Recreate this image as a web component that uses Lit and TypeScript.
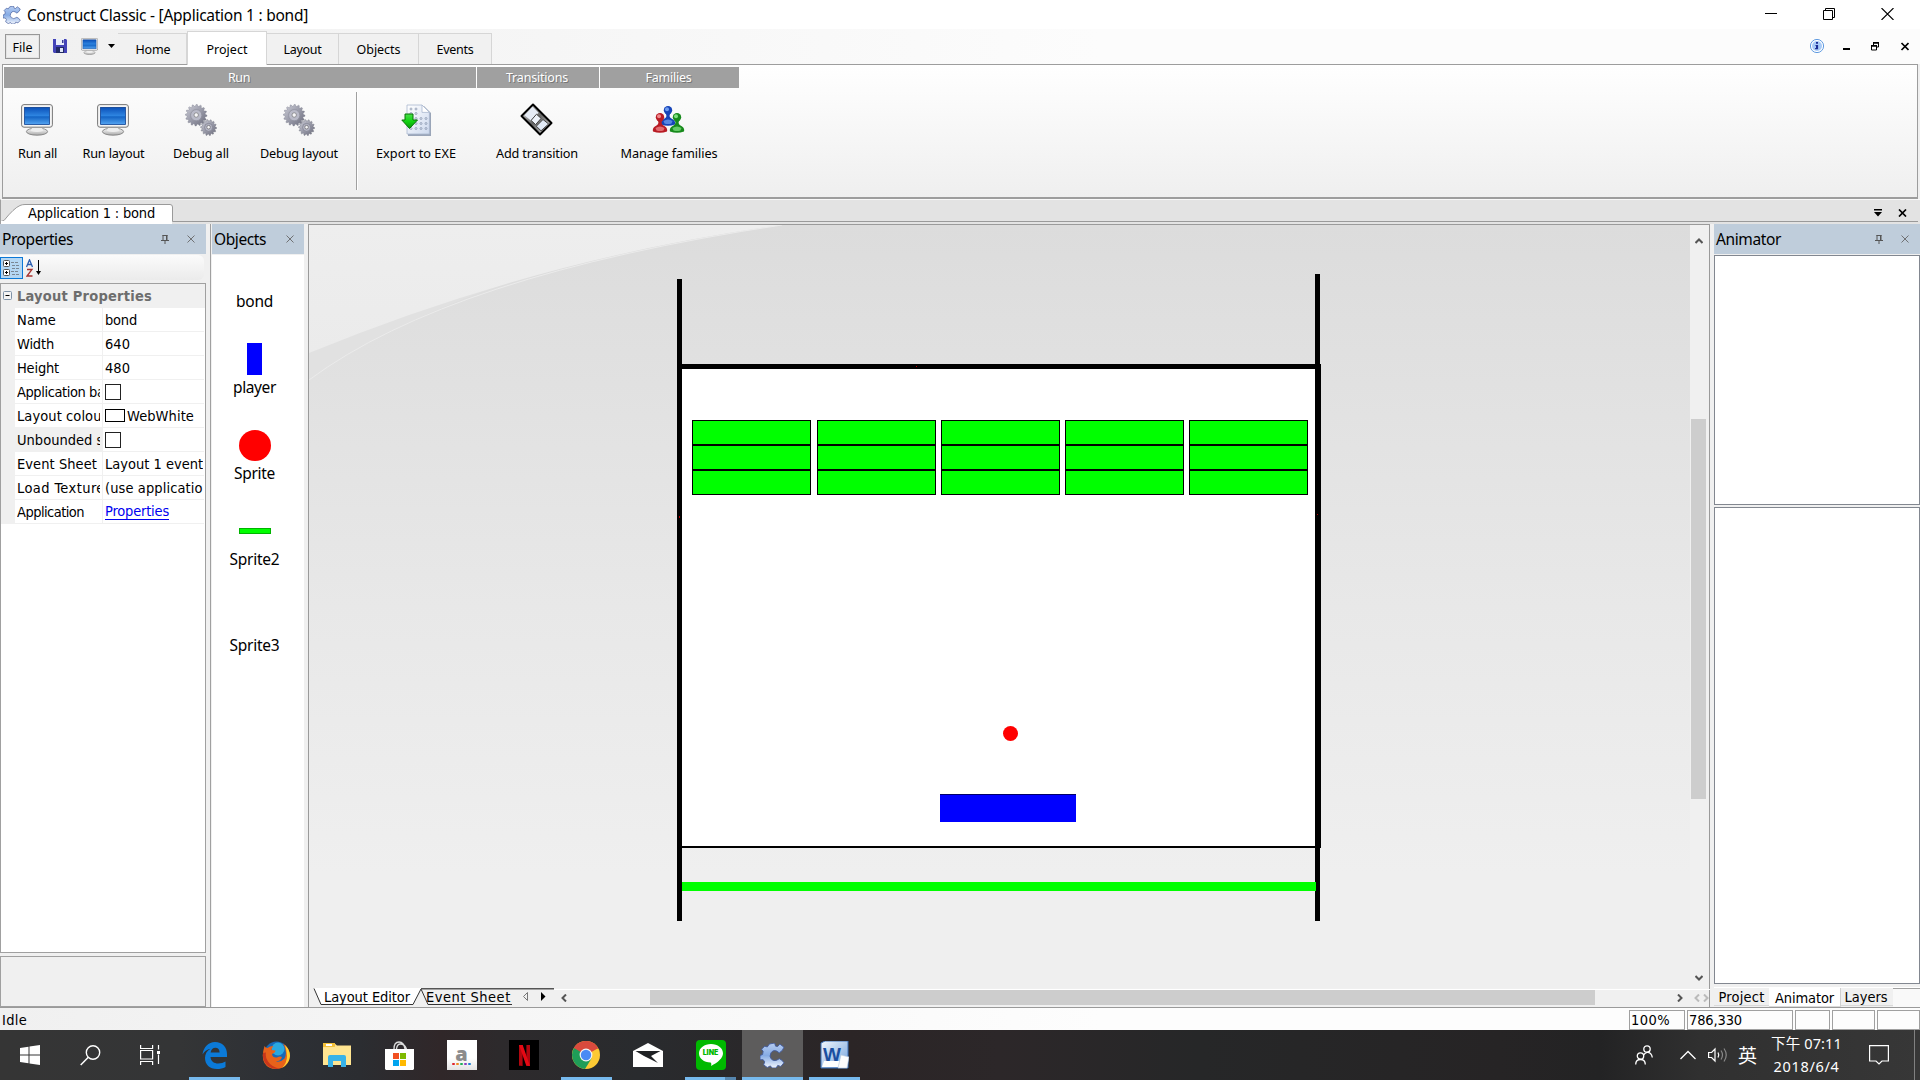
import { LitElement, html, css, svg } from "lit";
import { customElement, property } from "lit/decorators.js";

/* Text label whose letter spacing is adjusted so that it takes a given width. */
@customElement("fit-label")
class FitLabel extends LitElement {
  @property({ type: Number }) w = 0;
  @property() text = "";
  static styles = css`
    :host { display: inline-block; white-space: pre; flex: none; }
    .t { display: inline-block; }
  `;
  updated() {
    const s = this.renderRoot.querySelector(".t") as HTMLElement;
    s.style.letterSpacing = "0px";
    const n = s.getBoundingClientRect().width;
    if (this.w && n) {
      const d = (this.w - n) / this.text.length;
      s.style.letterSpacing = d.toFixed(3) + "px";
    }
  }
  render() {
    return html`<span class="t">${this.text}</span>`;
  }
}

const L = (text: string, w = 0) => html`<fit-label .text=${text} .w=${w}></fit-label>`;

const gearPath = (cx: number, cy: number, r: number, teeth: number, depth: number) => {
  let d = "";
  const n = teeth * 4;
  for (let i = 0; i < n; i++) {
    const a = (i / n) * Math.PI * 2;
    const rr = i % 4 < 2 ? r : r - depth;
    d += (i ? "L" : "M") + (cx + rr * Math.cos(a)).toFixed(2) + " " + (cy + rr * Math.sin(a)).toFixed(2);
  }
  return d + "Z";
};

const monitor = (w: number, h: number) => html`<svg width=${w} height=${h} viewBox="0 0 32 32">
  <defs>
    <linearGradient id="scr" x1="0" y1="0" x2="0" y2="1"><stop offset="0" stop-color="#0b50b8" /><stop offset=".5" stop-color="#2f86e2" /><stop offset=".55" stop-color="#1263c4" /><stop offset="1" stop-color="#55a5f2" /></linearGradient>
    <linearGradient id="std" x1="0" y1="0" x2="0" y2="1"><stop offset="0" stop-color="#fff" /><stop offset="1" stop-color="#aaa" /></linearGradient>
  </defs>
  <ellipse cx="16" cy="27.6" rx="10.6" ry="3.6" fill="url(#std)" stroke="#777" stroke-width=".8" />
  <path d="M11 23h10l1 4q-6 2-12 0z" fill="#eee" />
  <rect x=".6" y=".6" width="30.8" height="22.6" rx="2.4" fill="#f4f4f4" stroke="#777" />
  <rect x="3.6" y="3.4" width="24.8" height="17" fill="url(#scr)" stroke="#0a3f92" stroke-width=".8" />
</svg>`;

const gears = html`<svg width="32" height="32" viewBox="0 0 32 32">
  <defs><linearGradient id="gg" x1="0" y1="0" x2="1" y2="1"><stop offset="0" stop-color="#cfd0da" /><stop offset=".6" stop-color="#8f909f" /><stop offset="1" stop-color="#6d6e7c" /></linearGradient></defs>
  <path d=${gearPath(11.2, 11.2, 10.8, 16, 1.8)} fill="url(#gg)" stroke="#777988" stroke-width=".4" />
  <circle cx="11.2" cy="11.2" r="5.6" fill="#b9bac8" stroke="#8b8c9a" stroke-width=".7" />
  <circle cx="11.2" cy="11" r="2.2" fill="#f6f6f8" stroke="#666" stroke-width=".6" />
  <path d=${gearPath(23.6, 23.6, 8, 14, 1.5)} fill="url(#gg)" stroke="#666775" stroke-width=".4" />
  <circle cx="23.6" cy="23.4" r="4" fill="#b4b5c4" stroke="#7b7c8a" stroke-width=".7" />
  <circle cx="23.6" cy="23.2" r="1.8" fill="#f4f4f6" stroke="#555" stroke-width=".6" />
</svg>`;

const exportIcon = html`<svg width="30" height="32" viewBox="0 0 30 32">
  <defs>
    <linearGradient id="pg" x1="0" y1="0" x2="1" y2="1"><stop offset="0" stop-color="#fff" /><stop offset="1" stop-color="#cdd9ee" /></linearGradient>
    <linearGradient id="ar" x1="0" y1="0" x2="0" y2="1"><stop offset="0" stop-color="#4be04b" /><stop offset=".5" stop-color="#12d412" /><stop offset="1" stop-color="#089a08" /></linearGradient>
  </defs>
  <path d="M7 2h16l7 7v23H7z" fill="#9aa5b8" />
  <path d="M6 1h15l7.400 7.400V30H6z" fill="url(#pg)" stroke="#a9b7cf" stroke-width=".8" />
  <path d="M21 1v7.400h7.400z" fill="#fff" stroke="#a9b7cf" stroke-width=".8" />
  ${[5, 9.5, 14.5, 19.5, 24.5].map((y, r) => [10, 15, 20, 25].map((x, c) => (r < 2 && c > 1) ? "" : svg`<circle cx=${x} cy=${y} r="1" fill="none" stroke="#7f8ea8" stroke-width=".7" />`))}
  <path d="M4 10h8v6h4.500L8.500 24.500 .8 16H4z" fill="url(#ar)" stroke="#067406" stroke-width="1" />
</svg>`;

const filmIcon = html`<svg width="33" height="33" viewBox="0 0 33 33">
  <defs><linearGradient id="fl" x1="0" y1="0" x2="1" y2="1"><stop offset="0" stop-color="#eee" /><stop offset=".5" stop-color="#666" /><stop offset="1" stop-color="#ddd" /></linearGradient></defs>
  <path d="M13 1.500L31.500 20 20 31.500 1.500 13z" fill="url(#fl)" stroke="#000" stroke-width="2" stroke-linejoin="round" />
  <path d="M12.500 3.800l6 6-7.500 8-6.500-5.500z" fill="#e6ecf6" />
  <path d="M16.500 11.200l4.600 4.200-5.500 6.200-4.500-4.200z" fill="#eef3fb" stroke="#444" />
  <path d="M23 16.500l5.600 4.500-7.600 6.800-4.700-4.600z" fill="#e2ebf8" stroke="#444" />
</svg>`;

const person = (x: number, y: number, a: string, b: string) => svg`
  <g transform="translate(${x} ${y})">
    <path d="M0 18.500q-1-4 3.500-6 2.800-1.500 1.500-4.500h4q-1.300 3 1.500 4.500 4.500 2 3.500 6-7 2.500-14 0z" fill=${b} />
    <circle cx="7" cy="4.300" r="4.200" fill=${b} /><circle cx="6" cy="3.200" r="2" fill=${a} />
    <path d="M2.500 15q4.500-3 9 0l-1 2.500q-3.500 1-7 0z" fill=${a} opacity=".75" />
  </g>`;

const familyIcon = html`<svg width="33" height="27" viewBox="0 0 33 27">
  ${person(9, 0, "#6f9cf0", "#1644b8")}${person(1, 7, "#f0888c", "#b81c24")}${person(18, 7, "#7fe07f", "#178a1c")}
</svg>`;

const cIcon = (s: number) => html`<svg width=${s} height=${s} viewBox="0 0 24 24">
  <defs><linearGradient id="cg" x1="0" y1="0" x2="0" y2="1"><stop offset="0" stop-color="#b6cdf2" /><stop offset=".5" stop-color="#86abe4" /><stop offset="1" stop-color="#f2f6fd" /></linearGradient></defs>
  <path d="M9 1l5-1 1 3 2 .3L19 1l4 3-1.500 3-3 2.500q-5-4.500-8 0-2 3.500.5 6 3 3 7.500-.5l2.500 1.500L23 19l-3 3.500-3-1-1.500 2.500h-4L10 22l-3 1.500L3.500 21l1-3L3 16H0v-4l2.500-1 .5-3L1.500 6l3-3L7 3.800z" fill="url(#cg)" stroke="#445c9c" stroke-width=".9" />
</svg>`;

const pin = html`<svg width="8" height="9" viewBox="0 0 8 9"><path d="M2 0v5M5.500 0v5M1.500.5h5M0 5.500h8M4 6v3" stroke="#555" fill="none" /><path d="M5 0h1.500v5H5z" fill="#555" /></svg>`;
const thinX = html`<svg width="8" height="8" viewBox="0 0 8 8"><path d="M.5.5l7 7M7.500.5l-7 7" stroke="#666" stroke-width=".9" /></svg>`;
const boldX = html`<svg width="9" height="8" viewBox="0 0 9 8"><path d="M1 .5l7 7M8 .5l-7 7" stroke="#000" stroke-width="1.700" /></svg>`;

const rows: [string, number, unknown][] = [
  ["Name", 39, L("bond", 32)],
  ["Width", 37, L("640", 25)],
  ["Height", 42, L("480", 25)],
  ["Application background", 145, html`<i class="chk"></i>`],
  ["Layout colour", 90, html`<i class="swatch"></i>${L("WebWhite", 67)}`],
  ["Unbounded scrolling", 134, html`<i class="chk"></i>`],
  ["Event Sheet", 80, L("Layout 1 events", 105)],
  ["Load Textures", 95, L("(use application", 106)],
  ["Application", 67, html`<a class="link">${L("Properties", 64)}</a>`],
];

const objects: [string, number, string][] = [
  ["bond", 37, ""], ["player", 43, "blue"], ["Sprite", 41, "red"], ["Sprite2", 50, "green"], ["Sprite3", 50, ""],
];

const W = (n: number) => `width:${n}px`;

const taskIcons: { w: number; icon: unknown; cls?: string; bar?: number }[] = [
  { w: 60, icon: html`<svg width="20" height="20" viewBox="0 0 20 20"><path d="M0 3l8.500-1.300v7.800H0zM9.500 1.500L20 0v9.500H9.500zM0 10.500h8.500v7.800L0 17zM9.500 10.500H20V20l-10.500-1.500z" fill="#fff" /></svg>` },
  { w: 60, icon: html`<svg width="21" height="21" viewBox="0 0 21 21"><circle cx="13" cy="7.500" r="6.700" fill="none" stroke="#fff" stroke-width="1.400" /><path d="M8.300 12.300L.7 20" stroke="#fff" stroke-width="1.500" /></svg>` },
  { w: 59, icon: html`<svg width="20" height="20" viewBox="0 0 20 20"><path d="M.6 0v3.500h12V0M.6 20v-3.500h12V20M.6 5.500h12v8.500H.6zM18.500 0v4.500M18.500 9.500V19" fill="none" stroke="#fff" stroke-width="1.200" /><path d="M17 6h3v3h-3z" fill="#fff" /></svg>` },
  { w: 4, icon: "" },
  { w: 62, bar: 51, icon: html`<svg width="25" height="27" viewBox="0 0 25 27"><path d="M.5 12.500C1.500 5 6.500 0 13 0c7.500 0 12 5 12 12v3H8.500c.3 4.500 4 6.500 7.500 6.500 3 0 5.500-.8 7.500-2v5.500c-2.500 1.400-5.500 2-8.500 2-7.500 0-12-4.500-12-11 0-4 2-7.500 5.500-9.300C5 7.500 2.200 9.300.5 12.500zM8.600 10.500h9c0-3-1.500-4.800-4.200-4.800-2.600 0-4.300 2-4.800 4.800z" fill="#0b7ad8" /></svg>` },
  { w: 61, icon: html`<svg width="28" height="28" viewBox="0 0 28 28"><circle cx="14.500" cy="12.500" r="12" fill="#1769b8" /><circle cx="16" cy="8" r="6.500" fill="#2aa8e0" /><path d="M2.500 5q1 2 3 2 2-2 6-2-2 2-2 4l4 .5q0 2-3.500 3.500.5 4 5 3.500 3-1.500 5-.5-1 4-6 4.500 5 1 8.500-3Q26 11 21 2.500 27.500 7 28 14q0 6-4 10t-10 4Q6 28 2.500 22T2.500 5z" fill="#e8621a" /><path d="M23 4q5 5 5 11-1 8-8 12 5-5 5-12-.3-6-2-11z" fill="#ffcf30" /><path d="M1 12q-1 8 5 13 5 4 12 2.500-8-1-12-7-3-4-2-9z" fill="#c9371b" /></svg>` },
  { w: 62, icon: html`<svg width="28" height="24" viewBox="0 0 28 24"><path d="M0 0h11l3 2.500h14V22H0z" fill="#ffe08a" /><path d="M0 0h12v4H0z" fill="#f4c13a" /><path d="M3 1h6v2H3z" fill="#fff" /><path d="M0 5l14-1.500h14V22H0z" fill="#ffe591" /><path d="M5 24V14q0-2 2-2h14q2 0 2 2v10h-5v-6h-8v6z" fill="#38b3e8" /></svg>` },
  { w: 62, icon: html`<svg width="29" height="29" viewBox="0 0 29 29"><path d="M9 8Q9 1 14 1t6 7M11.500 8q.5-5 4-5 4 0 6 5" fill="none" stroke="#ddd" stroke-width="1.300" /><path d="M0 8h29v20l-1 1H1l-1-1z" fill="#fff" /><path d="M8 12h6v6H8z" fill="#f25022" /><path d="M15 12h6v6h-6z" fill="#7fba00" /><path d="M8 19h6v6H8z" fill="#00a4ef" /><path d="M15 19h6v6h-6z" fill="#ffb900" /></svg>` },
  { w: 63, icon: html`<span class="tile amazon"><b>a</b><span class="dots"><i></i><i></i><i></i><i></i><i></i></span></span>` },
  { w: 62, icon: html`<span class="tile netflix"><svg width="11" height="21" viewBox="0 0 11 21"><path d="M0 0h3.600v21q-2-.5-3.600-.2zM7.400 0H11v21q-2-.3-3.600-.3z" fill="#b1060f" /><path d="M0 0h3.700L11 21q-2-.4-3.700-.3z" fill="#e50914" /></svg></span>` },
  { w: 62, bar: 51, icon: html`<svg width="28" height="28" viewBox="0 0 28 28"><circle cx="14" cy="14" r="14" fill="#fcc934" /><path d="M14 14L1.900 7A14 14 0 0 1 26.100 7.300z" fill="#d94a3d" /><path d="M14 7.500h12.400A14 14 0 0 0 1.900 7l6.400 10.500z" fill="#d94a3d" /><path d="M1.900 7A14 14 0 0 0 13 28l6.500-10.500L14 14z" fill="#1f9d58" /><path d="M8.300 17.500L1.900 7z" fill="#1f9d58" /><circle cx="14" cy="14" r="6.400" fill="#f4f4f4" /><circle cx="14" cy="14" r="5.200" fill="#4a8af4" /></svg>` },
  { w: 62, icon: html`<svg width="30" height="24" viewBox="0 0 30 24"><path d="M0 8L15 0l15 8v16H0z" fill="#fff" /><path d="M2.500 8h25L18 13l7 7-14-7z" fill="#1f2124" /></svg>` },
  { w: 63, cls: "line", icon: html`<span class="tile lineapp"><svg width="24" height="22" viewBox="0 0 24 22"><path d="M12 0c6.600 0 12 4 12 9.300 0 4.700-5 9.200-12 12.700.5-1.500.5-3-.5-3.500C5 18.500 0 14.500 0 9.300 0 4 5.400 0 12 0z" fill="#fff" /></svg><b>LINE</b></span>` },
  { w: 61, cls: "active", bar: 61, icon: cIcon(25) },
  { w: 62, bar: 51, icon: html`<svg width="29" height="28" viewBox="0 0 29 28"><defs><linearGradient id="wg" x1="0" y1="0" x2="1" y2="1"><stop offset="0" stop-color="#f4f8fd" /><stop offset="1" stop-color="#6fa0dc" /></linearGradient></defs><path d="M1 2l4-2h23v27H1z" fill="url(#wg)" stroke="#3b6fb5" /><path d="M4 20h22v6H2z" fill="#fff" /><path d="M21 14l8 2-2 11h-9z" fill="#fdfdfd" stroke="#b9c9de" stroke-width=".6" /><text x="3" y="19.500" class="word">W</text></svg>` },
];

@customElement("app-root")
class AppRoot extends LitElement {
  static styles = css`
    :host { display: block; width: 1920px; height: 1080px; overflow: hidden; background: #f0f0f0; color: #000;
      font-family: "Noto Sans", "Noto Sans CJK TC", sans-serif; font-size: 13px; }
    * { box-sizing: border-box; }
    svg { display: block; flex: none; }
    .app { display: flex; flex-direction: column; height: 1080px; }
    .tah { font-family: "DejaVu Sans Condensed", "DejaVu Sans", sans-serif; font-stretch: condensed; font-size: 14.500px; }

    .title { height: 29px; flex: none; background: #fff; display: flex; align-items: center; padding-left: 3px; font-size: 15.500px; }
    .title .cap { margin-left: 6px; }
    .wins { margin-left: auto; display: flex; align-items: center; gap: 46px; padding: 0 26px 2px 0; }

    .tabs { height: 35px; flex: none; display: flex; background: linear-gradient(90deg, #f0f0f0 0, #fcfcfc 1100px); line-height: 19px; font-size: 12.500px; }
    .file { width: 35px; height: 25px; margin: 5px 0 0 5px; border: 1px solid #979797; outline: 1px solid #e4e4e4; outline-offset: -2px; display: flex; align-items: center; justify-content: center; padding-top: 1px; }
    .quick { width: 78px; display: flex; align-items: flex-start; padding: 9px 0 0 13px; }
    .quick .q2 { margin-left: 14px; } .quick .q3 { margin: 6px 0 0 10px; }
    .tab { height: 31px; margin-top: 4px; border: 1px solid #d6d6d6; border-left: 0; border-bottom: 0; display: flex; align-items: center; justify-content: center; background: #f1f1f1; }
    .tab.on { height: 34px; margin-top: 2px; margin-bottom: -1px; background: #fff; border-left: 1px solid #d6d6d6; z-index: 1; padding-top: 2px; }
    .tab.first { padding-left: 2px; }
    .mdi { margin-left: auto; display: flex; align-items: center; padding: 0 11px 0 0; }

    .ribbon { height: 135px; flex: none; margin: 0 2px 0 2px; border: 1px solid #9d9d9d; border-bottom-width: 2px; background: linear-gradient(#fff, #efefef); padding: 2px 0 0 1px; }
    .heads { display: flex; gap: 1px; height: 21px; color: #fff; font-size: 12.500px; }
    .head { background: #a0a0a0; display: flex; align-items: center; justify-content: center; text-shadow: 1px 1px 0 #777; padding-right: 2px; }
    .cmds { display: flex; height: 102px; padding-top: 4px; }
    .cmd { display: flex; flex-direction: column; align-items: center; padding-top: 11px; }
    .cmd .ic { height: 33px; display: flex; align-items: center; padding-right: 1px; }
    .cmd .tx { margin-top: 7px; line-height: 20px; font-size: 12.700px; }
    .rule { width: 2px; height: 98px; background: linear-gradient(90deg, #a0a0a0 50%, #fff 50%); }

    .doc { height: 25px; flex: none; background: #e3e3e3; display: flex; align-items: flex-end; border-left: 1px solid #a0a0a0; border-top: 1px solid #f8f8f8; }
    .doctab { height: 20px; flex: none; width: 174px; display: grid; }
    .doctab > * { grid-area: 1 / 1; }
    .doctab .tx { padding-left: 27px; line-height: 19px; height: 18px; overflow: hidden; }
    .docr { flex: 1; align-self: stretch; border-bottom: 1px solid #9a9a9a; margin: 0 2px 2px 0; display: flex; justify-content: flex-end; align-items: center; gap: 16px; padding: 4px 11px 0 0; }

    .main { height: 784px; flex: none; display: flex; background: #f0f0f0; border-bottom: 1px solid #9a9a9a; }
    .phead { height: 30px; flex: none; background: #bfcddb; display: flex; align-items: center; font-size: 15.500px; padding: 0 0 1px 2px; }
    .phead .r { margin-left: auto; display: flex; align-items: center; gap: 18px; padding-top: 1px; }
    .props { width: 206px; flex: none; display: flex; flex-direction: column; }
    .tools { height: 25px; margin: 1px 2px 3px 0; background: linear-gradient(#fbfbfb, #ebebeb); border-radius: 0 6px 6px 0; display: flex; align-items: center; padding-top: 2px; }
    .catbtn { width: 23px; height: 22px; border: 1px solid #0c78d6; background: #b5d7f3; display: flex; align-items: center; justify-content: center; }
    .tools .az { margin-left: 3px; }
    .grid { height: 670px; flex: none; border: 1px solid #a0a0a0; background: #fff; }
    .ghead { height: 24px; background: #f0f0f0; display: flex; align-items: center; color: #6d6d6d; font-weight: bold; }
    .ghead svg { margin: 0 5px 0 2px; }
    .row { height: 24px; display: flex; border-left: 14px solid #f0f0f0; }
    .row .k { width: 88px; border-right: 1px solid #f0f0f0; border-bottom: 1px solid #f0f0f0; padding: 1px 0 0 2px; flex: none; display: flex; align-items: center; }
    .clip { overflow: hidden; width: 83px; display: flex; flex: none; }
    .row.sel .k { background: #f0f0f0; }
    .row .v { width: 101px; border-bottom: 1px solid #f0f0f0; padding: 1px 0 0 2px; display: flex; align-items: center; }
    .row .v .clip { width: 98px; align-items: center; }
    .chk { width: 16px; height: 16px; border: 1px solid #222; background: #fff; flex: none; }
    .swatch { width: 20px; height: 13px; border: 1px solid #000; flex: none; margin-right: 2px; }
    .link { color: #0000f0; border-bottom: 1px solid #0000f0; line-height: 16px; }
    .desc { height: 52px; margin-top: 3px; border: 1px solid #a0a0a0; }

    .objs { width: 94px; flex: none; margin-left: 4px; border-left: 1px solid #a0a0a0; padding-left: 1px; display: flex; flex-direction: column; }
    .olist { flex: 1; background: #fff; margin-top: 1px; display: flex; flex-direction: column; align-items: center; font-size: 15.500px; padding: 2px 7px 0 0; }
    .obj { height: 86px; flex: none; display: flex; flex-direction: column; align-items: center; }
    .obj .pic { height: 32px; display: flex; align-items: center; justify-content: center; margin-bottom: 1px; }
    .obj .tx { line-height: 22px; }
    .blue { width: 15px; height: 32px; background: #00f; }
    .red { width: 32px; height: 31px; border-radius: 50%; background: #f00; }
    .green { width: 32px; height: 6px; background: #0f0; border: 1px solid #00b400; margin-top: 0; }

    .edit { width: 1402px; flex: none; margin-left: 4px; border-right: 1px solid #9a9a9a; display: flex; flex-direction: column; }
    .area { height: 764px; flex: none; display: flex; border-left: 1px solid #9a9a9a; border-top: 1px solid #9a9a9a; }
    .vs { width: 15px; margin: 5px 0 0 1px; background: #f0f0f0; display: flex; flex-direction: column; align-items: center; }
    .vs .up { margin-top: 7px; }
    .vs .thumb { width: 15px; height: 380px; margin-top: 174px; background: #cdcdcd; }
    .vs .dn { margin-top: 175px; }
    .hs { height: 19px; display: flex; border-left: 1px solid #9a9a9a; background: #f0f0f0; }
    .etabs { width: 245px; flex: none; display: grid; height: 17px; }
    .etabs > * { grid-area: 1 / 1; }
    .etext { display: flex; padding-left: 15px; line-height: 19px; }
    .etext .e2 { margin-left: 16px; width: 87px; overflow: hidden; }
    .hbar { flex: 1; display: flex; align-items: center; height: 16px; border-top: 1px solid #fff; margin-top: 1px; }
    .hbar .thumb { width: 945px; height: 15px; background: #cdcdcd; }

    .anim { width: 210px; flex: none; padding-left: 4px; display: flex; flex-direction: column; }
    .box { border: 1px solid #828790; background: #fff; flex: none; }
    .atabs { display: flex; height: 20px; border-top: 1px solid #fff; }
    .atab { background: #f0f0f0; height: 18px; border-bottom: 1px solid #d9d9d9; display: flex; justify-content: center; line-height: 18px; overflow: hidden; }
    .atab.last { padding-right: 2px; }
    .atab.on { background: #fff; height: 19px; line-height: 20px; border-right: 1px solid #d0d0d0; }
    .afill { flex: 1; border-top: 1px solid #a0a0a0; background: #f9f9f9; }

    .status { height: 22px; flex: none; background: linear-gradient(90deg, #f0f0f0, #fdfdfd 1100px); display: flex; align-items: center; padding-left: 2px; }
    .status .msg { padding-top: 2px; }
    .cells { margin-left: auto; display: flex; gap: 2px; }
    .cell { height: 20px; margin-top: 1px; border: 1px solid #a0a0a0; line-height: 19px; padding-left: 1px; overflow: hidden; }

    .task { height: 50px; flex: none; display: flex; color: #fff;
      background: linear-gradient(90deg, #353535 0, #343536 180px, #2d3035 280px, #2b2d31 360px, #302729 440px, #2d2a2c 500px, #292b2e 640px, #2b2526 850px, #2c2729 1000px, #262728 1200px, #262425 1500px, #232324 1600px, #303030 1700px, #373737 1920px); }
    .slot { display: flex; align-items: center; justify-content: center; flex: none; position: relative; }
    .slot.active { background: #5d5c5c; }
    .bar { position: absolute; bottom: 0; height: 3px; background: #76b9ed; }
    .bar.l1 { left: 6px; width: 40px; } .bar.l2 { left: 46px; width: 11px; background: #5686ae; }
    .tile { width: 30px; height: 30px; display: flex; align-items: center; justify-content: center; }
    .amazon { background: linear-gradient(#fff 60%, #e4e4e4); flex-direction: column; color: #8c8c8c; font: bold 20px/18px "Open Sans", sans-serif; }
    .dots { display: flex; gap: 1.500px; } .dots i { width: 2.500px; height: 2.500px; border-radius: 50%; background: #e0222c; }
    .dots i:nth-child(2) { background: #f08a1c; } .dots i:nth-child(3) { background: #1fae5a; } .dots i:nth-child(4) { background: #8a3fc0; } .dots i:nth-child(5) { background: #1c7fd0; }
    .netflix { background: #000; }
    .lineapp { background: #00b900; border-radius: 4px; display: grid; place-items: center; }
    .lineapp > * { grid-area: 1 / 1; }
    .lineapp b { color: #00b900; font: 900 7px/8px Inter, sans-serif; margin-bottom: 4px; }
    .word { font: bold 19px "Liberation Sans", sans-serif; fill: #1b4fa0; }
    .tray { margin-left: auto; display: flex; align-items: center; }
    .ime { font: 19px/24px "Noto Sans CJK TC", sans-serif; margin-left: 10px; }
    .clock { margin-left: 12px; width: 75px; display: flex; flex-direction: column; align-items: center; font-size: 14.500px; line-height: 23px; padding-bottom: 1px; }
    .peek { margin-left: 25px; width: 6px; height: 50px; border-left: 1px solid #808080; }
  `;

  stage() {
    const cols = [692, 817, 941, 1065, 1189];
    const ys = [420, 445, 470];
    return html`<svg width="1381" height="763" viewBox="309 225 1381 763" shape-rendering="crispEdges">
      <defs>
        <linearGradient id="bg" x1="0" y1="0" x2="0" y2="1"><stop offset="0" stop-color="#dcdcdc" /><stop offset=".5" stop-color="#e8e8e8" /><stop offset=".85" stop-color="#efefef" /><stop offset="1" stop-color="#efefef" /></linearGradient>
        <linearGradient id="sw" x1="0" y1="0" x2="0" y2="1"><stop offset="0" stop-color="#eeeeee" /><stop offset="1" stop-color="#ebebeb" /></linearGradient>
      </defs>
      <rect x="309" y="225" width="1381" height="763" fill="url(#bg)" />
      <g shape-rendering="auto">
        <path d="M309 380Q420 305 560 267L533 273Q420 302 309 353z" fill="#e1e1e1" />
        <path d="M309 225H782Q540 258 309 353z" fill="url(#sw)" />
        <path d="M309 380Q450 275 782 225" fill="none" stroke="#ebebeb" />
      </g>
      <rect x="677" y="364" width="644" height="484" />
      <rect x="682" y="369" width="633" height="477" fill="#fff" />
      <rect x="677" y="279" width="5" height="642" />
      <rect x="1315" y="274" width="5" height="647" />
      ${cols.map((x) => ys.map((y) => svg`<rect x=${x + 0.5} y=${y + 0.5} width="118" height="24" fill="#0f0" stroke="#000" />`))}
      <circle cx="1010.500" cy="733.500" r="7.500" fill="#f00" shape-rendering="auto" />
      <rect x="940" y="794" width="136" height="28" fill="#00f" />
      <rect x="940" y="794" width="136" height="1" fill="#00006a" />
      <rect x="682" y="882" width="634" height="9" fill="#0f0" />
      <rect x="916" y="366" width="1" height="1" fill="#b00" /><rect x="679" y="516" width="1" height="2" fill="#b00" /><rect x="1317" y="514" width="1" height="1" fill="#b00" />
    </svg>`;
  }

  cmd(w: number, icon: unknown, text: string, tw: number) {
    return html`<div class="cmd" style=${W(w)}><div class="ic">${icon}</div><div class="tx">${L(text, tw)}</div></div>`;
  }

  render() {
    const chev = (d: string, c = "#555") => html`<svg width="8" height="8" viewBox="0 0 8 8"><path d=${d} fill="none" stroke=${c} stroke-width="2" /></svg>`;
    return html`<div class="app">
      <div class="title">${cIcon(18)}<span class="cap">${L("Construct Classic - [Application 1 : bond]", 281)}</span>
        <div class="wins">
          <svg width="12" height="12"><path d="M0 5.500h12" stroke="#000" /></svg>
          <svg width="12" height="12"><path d="M.5 2.500h9v9h-9zM2.500 2.500v-2h9v9h-2" fill="none" stroke="#000" /></svg>
          <svg width="13" height="12" viewBox="0 0 13 12"><path d="M.5 0l12 12M12.500 0l-12 12" stroke="#000" stroke-width="1.100" /></svg>
        </div>
      </div>

      <div class="tabs">
        <div class="file">${L("File", 20)}</div>
        <div class="quick">
          <svg width="14" height="15" viewBox="0 0 14 15"><path d="M0 1h13l1 1v13H1l-1-1z" fill="#4444b8" /><path d="M3 1h8v6H3z" fill="#e9eefa" /><path d="M9 2h1.500v3H9z" fill="#3a3a9a" /><path d="M3 9h8v6H3z" fill="#222a66" /><path d="M7 10h3v4H7z" fill="#dfe5f5" /></svg>
          <span class="q2">${monitor(17, 17)}</span>
          <svg class="q3" width="7" height="4"><path d="M0 0h7L3.500 4z" /></svg>
        </div>
        <div class="tab first" style=${W(69)}>${L("Home", 35)}</div>
        <div class="tab on" style=${W(80)}>${L("Project", 41)}</div>
        <div class="tab" style=${W(72)}>${L("Layout", 38)}</div>
        <div class="tab" style=${W(80)}>${L("Objects", 44)}</div>
        <div class="tab" style=${W(73)}>${L("Events", 37)}</div>
        <div class="mdi">
          <svg width="99" height="16" viewBox="0 0 99 16">
            <circle cx="7" cy="7" r="6.600" fill="#fff" stroke="#4f90dd" stroke-width=".9" /><circle cx="7" cy="7" r="5" fill="#a9cbf7" /><path d="M6 3h2v1.800H6zM5.500 6h2.600v4.200h-3V9H6V7h-.5z" fill="#1b2d94" />
            <path d="M33 9h7v2h-7z" />
            <path d="M63.500 6V4h5v4h-1.500M61.500 7h5v4h-5z" fill="none" stroke="#000" /><path d="M61 6h6v1.500h-6zM63 3h6v1.500h-6z" />
            <path d="M91.500 4l7 7M98.500 4l-7 7" stroke="#000" stroke-width="1.700" />
          </svg>
        </div>
      </div>

      <div class="ribbon">
        <div class="heads"><div class="head" style=${W(472)}>${L("Run", 22)}</div><div class="head" style=${W(122)}>${L("Transitions", 62)}</div><div class="head" style=${W(139)}>${L("Families", 46)}</div></div>
        <div class="cmds">
          ${this.cmd(67, monitor(32, 32), "Run all", 39)}
          ${this.cmd(85, monitor(32, 32), "Run layout", 62)}
          ${this.cmd(90, gears, "Debug all", 56)}
          ${this.cmd(106, gears, "Debug layout", 78)}
          <div style=${W(4)}></div><div class="rule"></div>
          ${this.cmd(116, exportIcon, "Export to EXE", 80)}
          ${this.cmd(126, filmIcon, "Add transition", 82)}
          ${this.cmd(138, familyIcon, "Manage families", 97)}
        </div>
      </div>

      <div class="doc">
        <div class="doctab"><svg width="174" height="20"><path d="M0 17.500L3 16.500Q13 4 19 1.500Q21 .5 24 .5H169Q171.500.5 171.500 3V17.500H174" fill="#fff" stroke="#9a9a9a" /><path d="M3 17h168v3H0v-3z" fill="#fff" /></svg><div class="tx tah">${L("Application 1 : bond", 127)}</div></div>
        <div class="docr"><svg width="8" height="8"><path d="M0 0h8v1.500H0zM0 3h8L4 7.500z" /></svg>${boldX}</div>
      </div>

      <div class="main">
        <div class="props">
          <div class="phead">${L("Properties", 71)}<div class="r" style="padding-right:11px">${pin}${thinX}</div></div>
          <div class="tools"><div class="catbtn"><svg width="17" height="17"><rect x=".5" y=".5" width="6" height="6" rx="1" fill="#fff" stroke="#555" /><rect x=".5" y="9.500" width="6" height="6" rx="1" fill="#fff" stroke="#555" /><path d="M2 3.500h3M3.500 2v3M2 12.500h3M3.500 11v3" stroke="#000" /><path d="M8 2.500h8M9 5.500h7M9 8.500h7M8 11.500h8M9 14.500h7" stroke="#7b8794" stroke-dasharray="3 1" /></svg></div>
            <svg class="az" width="16" height="18" viewBox="0 0 16 18"><path d="M.5 8L3.500.8 6.500 8M1.500 5.500h4" fill="none" stroke="#2a5db0" stroke-width="1.300" /><path d="M1 10.500h5L1 17h5.500" fill="none" stroke="#a8322e" stroke-width="1.300" /><path d="M12.500 1v13" stroke="#000" /><path d="M10 12h5l-2.500 4z" /></svg></div>
          <div class="grid tah">
            <div class="ghead"><svg width="9" height="9"><rect x=".5" y=".5" width="8" height="8" rx="1" fill="#f4f4f4" stroke="#7f93a8" /><path d="M2.500 4.500h4" stroke="#000" /></svg>${L("Layout Properties", 135)}</div>
            ${rows.map(([k, w, v], i) => html`<div class="row ${i === 5 ? "sel" : ""}"><div class="k"><div class="clip">${L(k, w)}</div></div><div class="v"><div class="clip">${v}</div></div></div>`)}
          </div>
          <div class="desc"></div>
        </div>

        <div class="objs">
          <div class="phead">${L("Objects", 52)}<div class="r" style="padding-right:10px">${thinX}</div></div>
          <div class="olist">
            ${objects.map(([n, w, c]) => html`<div class="obj"><div class="pic"><div class=${c}></div></div><div class="tx">${L(n, w)}</div></div>`)}
          </div>
        </div>

        <div class="edit">
          <div class="area">${this.stage()}
            <div class="vs"><span class="up">${chev("M.5 6L4 2.500 7.500 6")}</span><div class="thumb"></div><span class="dn">${chev("M.5 2L4 5.500 7.500 2")}</span></div>
          </div>
          <div class="hs">
            <div class="etabs">
              <svg width="245" height="18"><path d="M5 0L12 16H104L112 0z" fill="#fff" /><path d="M5 .5L12 16.500H104L112 1L119 16.500H203" fill="none" stroke="#333" /><path d="M112 .5H245" stroke="#555" stroke-width="2" /><path d="M218.500 4.500v8l-4-4z" fill="none" stroke="#777" /><path d="M232 4v9l4.500-4.500z" /></svg>
              <div class="etext tah">${L("Layout Editor", 86)}<div class="e2">${L("Event Sheet Editor", 131)}</div></div>
            </div>
            <div class="hbar"><span style="margin-left:6px">${chev("M6 .5L2.500 4 6 7.500")}</span><div class="thumb" style="margin-left:82px"></div><span style="margin-left:81px">${chev("M2 .5L5.500 4 2 7.500")}</span><span style="margin-left:9px">${chev("M6 .5L2.500 4 6 7.500", "#bbb")}</span><span style="margin-left:1px">${chev("M2 .5L5.500 4 2 7.500", "#bbb")}</span></div>
          </div>
        </div>

        <div class="anim">
          <div class="phead">${L("Animator", 65)}<div class="r" style="padding-right:11px">${pin}${thinX}</div></div>
          <div class="box" style="height:250px;margin-top:1px"></div>
          <div class="box" style="height:477px;margin-top:2px"></div>
          <div style="height:3px;flex:none"></div>
          <div class="atabs tah"><div class="atab" style=${W(55)}>${L("Project", 46)}</div><div class="atab on" style=${W(72)}>${L("Animator", 59)}</div><div class="atab last" style=${W(52)}>${L("Layers", 43)}</div><div class="afill"></div></div>
        </div>
      </div>

      <div class="status tah"><span class="msg">${L("Idle", 25)}</span>
        <div class="cells"><div class="cell" style=${W(56)}>${L("100%", 39)}</div><div class="cell" style=${W(106)}>${L("786,330", 53)}</div><div class="cell" style=${W(35)}></div><div class="cell" style=${W(43)}></div><div class="cell" style=${W(43)}></div></div>
      </div>

      <div class="task">
        ${taskIcons.map((t) => html`<div class="slot ${t.cls ?? ""}" style=${W(t.w)}>${t.icon}${t.bar ? html`<i class="bar" style=${W(t.bar)}></i>` : ""}${t.cls === "line" ? html`<i class="bar l1"></i><i class="bar l2"></i>` : ""}</div>`)}
        <div class="tray">
          <svg width="18" height="20" viewBox="0 0 18 20"><circle cx="12" cy="4" r="3.200" fill="none" stroke="#fff" stroke-width="1.300" /><path d="M8.500 10q3.500-4.500 7-1.500 1.500 1.500 1.800 4" fill="none" stroke="#fff" stroke-width="1.300" /><circle cx="5.500" cy="11" r="3.200" fill="none" stroke="#fff" stroke-width="1.300" /><path d="M.7 19.500q0-5 4.800-5t4.800 5" fill="none" stroke="#fff" stroke-width="1.300" /></svg>
          <svg style="margin-left:27px" width="16" height="10" viewBox="0 0 16 10"><path d="M.5 9L8 1.500 15.500 9" fill="none" stroke="#fff" stroke-width="1.300" /></svg>
          <svg style="margin-left:12px" width="20" height="16" viewBox="0 0 20 16"><path d="M.6 5.500h3L7 2v12l-3.400-3.500h-3z" fill="none" stroke="#fff" stroke-width="1.200" /><path d="M10 5.500q1.500 2.500 0 5" fill="none" stroke="#fff" stroke-width="1.200" /><path d="M13 3.500q3 4.500 0 9M16 1.500q4.500 6.500 0 13" fill="none" stroke="#888" stroke-width="1.200" /></svg>
          <span class="ime">英</span>
          <div class="clock">${L("下午 07:11", 71)}${L("2018/6/4", 66)}</div>
          <svg style="margin-left:25px" width="20" height="20" viewBox="0 0 20 20"><path d="M.6.6h18.800v15.400h-6.400l-3 3-3-3H.6z" fill="none" stroke="#fff" stroke-width="1.200" /></svg>
          <div class="peek"></div>
        </div>
      </div>
    </div>`;
  }
}
